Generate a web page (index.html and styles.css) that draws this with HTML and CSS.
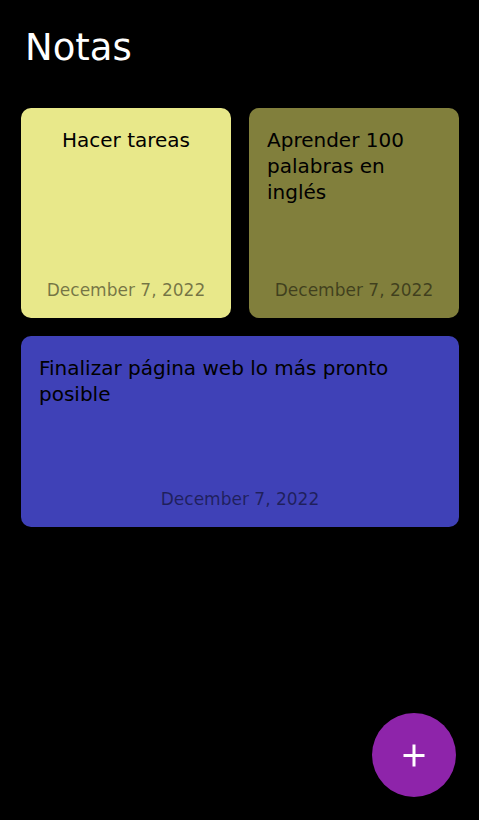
FILE: index.html
```html
<!DOCTYPE html>
<html lang="es">
<head>
<meta charset="utf-8">
<title>Notas</title>
<link rel="stylesheet" href="styles.css">
</head>
<body>
<header class="header">
  <h1 class="title">Notas</h1>
</header>
<main class="notes">
  <article class="note note--yellow note--square">
    <h2 class="note-text">Hacer tareas</h2>
    <p class="note-date">December 7, 2022</p>
  </article>
  <article class="note note--olive note--square">
    <h2 class="note-text">Aprender 100 palabras en inglés</h2>
    <p class="note-date">December 7, 2022</p>
  </article>
  <article class="note note--blue note--wide">
    <h2 class="note-text">Finalizar página web lo más pronto posible</h2>
    <p class="note-date">December 7, 2022</p>
  </article>
</main>
<button class="fab" aria-label="Agregar nota">
  <svg width="24" height="24" viewBox="0 0 24 24" aria-hidden="true">
    <path d="M12 1.5v22M1.5 12.5h21" stroke="#fff" stroke-width="3" fill="none"/>
  </svg>
</button>
</body>
</html>
```
FILE: styles.css
```css
* { box-sizing: border-box; }
html, body {
  margin: 0;
  background: #000;
  min-height: 100%;
}
body {
  font-family: "DejaVu Sans", "Liberation Sans", sans-serif;
  color: #000;
  height: 820px;
}
.header {
  padding: 26px 25px 0;
}
.title {
  margin: 0;
  font-size: 37px;
  font-weight: 400;
  line-height: 43px;
  color: #fff;
}
.notes {
  display: grid;
  grid-template-columns: 1fr 1fr;
  gap: 18px;
  padding: 39px 20px 0 21px;
}
.note {
  display: flex;
  flex-direction: column;
  align-items: center;
  justify-content: space-between;
  border-radius: 10px;
  padding: 19px 18px 18px;
}
.note--square { height: 210px; }
.note--wide {
  grid-column: 1 / -1;
  height: 191px;
}
.note--yellow { background: #e8e88a; }
.note--olive { background: #817f3c; }
.note--blue { background: #3f41b7; }
.note-text {
  margin: 0;
  font-size: 20px;
  font-weight: 400;
  line-height: 26px;
  max-width: 100%;
}
.note-date {
  margin: 0;
  font-size: 17px;
  line-height: 20px;
  color: rgba(0, 0, 0, 0.5);
}
.fab {
  position: fixed;
  right: 23px;
  bottom: 23px;
  width: 84px;
  height: 84px;
  border: none;
  border-radius: 50%;
  background: #8e24aa;
  display: flex;
  align-items: center;
  justify-content: center;
  padding: 0;
}
```
